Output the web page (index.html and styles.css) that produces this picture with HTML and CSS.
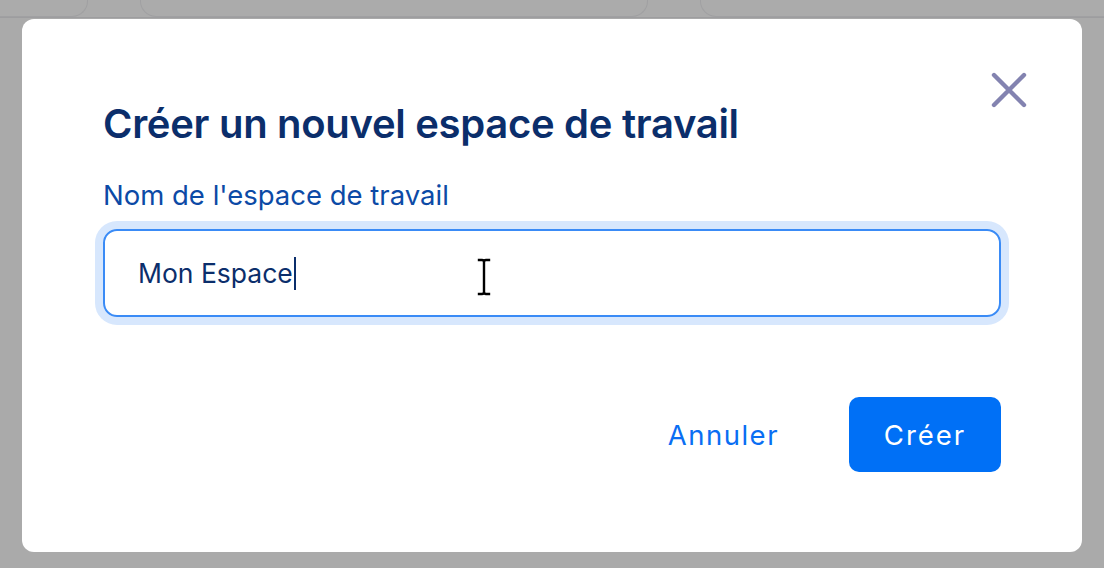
FILE: index.html
```html
<!DOCTYPE html>
<html lang="fr">
<head>
<meta charset="utf-8">
<title>Créer un nouvel espace de travail</title>
<link rel="stylesheet" href="styles.css">
</head>
<body>
<div class="backdrop">
  <div class="top-strip">
    <div class="bg-card bg-card-a"></div>
    <div class="bg-card bg-card-b"></div>
    <div class="bg-card bg-card-c"></div>
  </div>
  <div class="modal">
    <button class="close" aria-label="Fermer">
      <svg width="38" height="38" viewBox="0 0 38 38"><path d="M4 4 L34 34 M34 4 L4 34" stroke="#8383b0" stroke-width="4.4" stroke-linecap="round" fill="none"/></svg>
    </button>
    <h1 class="title">Créer un nouvel espace de travail</h1>
    <label class="label">Nom de l'espace de travail</label>
    <div class="field">
      <div class="input"><span class="value">Mon Espace</span><span class="caret"></span></div>
      <svg class="ibeam" width="16" height="38" viewBox="0 0 16 38"><path d="M3 2 H6 Q8 2 8 4 V34 Q8 36 6 36 H3 M13 2 H10 Q8 2 8 4 M8 34 Q8 36 10 36 H13" stroke="#fff" stroke-width="4.5" fill="none" stroke-linecap="square"/><path d="M3 2 H6 Q8 2 8 4 V34 Q8 36 6 36 H3 M13 2 H10 Q8 2 8 4 M8 34 Q8 36 10 36 H13" stroke="#000" stroke-width="2.4" fill="none" stroke-linecap="square"/></svg>
    </div>
    <div class="footer">
      <button class="btn-cancel">Annuler</button>
      <button class="btn-create">Créer</button>
    </div>
  </div>
</div>
</body>
</html>
```
FILE: styles.css
```css
* { box-sizing: border-box; }
html, body { margin: 0; padding: 0; }
body {
  background: #aaaaaa;
  width: 1104px;
  height: 568px;
  overflow: hidden;
  font-family: Inter, "Noto Sans", sans-serif;
}
.backdrop { display: flex; flex-direction: column; }
.top-strip {
  height: 18px;
  display: flex;
  gap: 52px;
  border-bottom: 1px solid #9d9d9f;
  background: #ababab;
  overflow: hidden;
}
.bg-card {
  margin-top: -20px;
  border: 1px solid #a0a0a2;
  border-top: none;
  border-radius: 0 0 16px 16px;
  background: #ababab;
  flex: none;
  height: 37px;
}
.bg-card-a { width: 108px; margin-left: -20px; }
.bg-card-b { width: 508px; }
.bg-card-c { width: 440px; }
.modal {
  position: relative;
  margin: 1px 0 0 22px;
  width: 1060px;
  height: 533px;
  background: #fff;
  border-radius: 12px;
  padding: 0 81px;
  display: flex;
  flex-direction: column;
}
.close {
  position: absolute;
  left: 968px;
  top: 52px;
  width: 38px;
  height: 38px;
  padding: 0;
  border: none;
  background: none;
}
.close svg { display: block; }
.title {
  margin: 81px 0 0;
  font-size: 40px;
  line-height: 48px;
  letter-spacing: -0.3px;
  font-weight: 600;
  color: #0b2e6b;
}
.label {
  margin-top: 30px;
  font-size: 27.5px;
  line-height: 34px;
  color: #0c4aa6;
}
.field { position: relative; margin-top: 17px; }
.input {
  height: 88px;
  border: 2px solid #3a8bf6;
  border-radius: 14px;
  box-shadow: 0 0 0 8px #d7e7fd;
  display: flex;
  align-items: center;
  padding-left: 33px;
}
.value {
  font-size: 26.5px;
  color: #0b2e6b;
}
.caret {
  width: 2px;
  height: 33px;
  background: #0b2e6b;
  margin-left: 1px;
}
.ibeam {
  position: absolute;
  left: 373px;
  top: 29px;
}
.footer {
  margin-top: 80px;
  display: flex;
  justify-content: flex-end;
  align-items: center;
  gap: 70px;
}
.btn-cancel {
  border: none;
  background: none;
  padding: 0;
  font-family: inherit;
  font-size: 27.5px;
  letter-spacing: 1.5px;
  color: #0a6ef3;
}
.btn-create {
  width: 152px;
  height: 75px;
  border: none;
  border-radius: 10px;
  background: #0070f6;
  color: #fff;
  font-family: inherit;
  font-size: 27.5px;
  letter-spacing: 2px;
}
```
